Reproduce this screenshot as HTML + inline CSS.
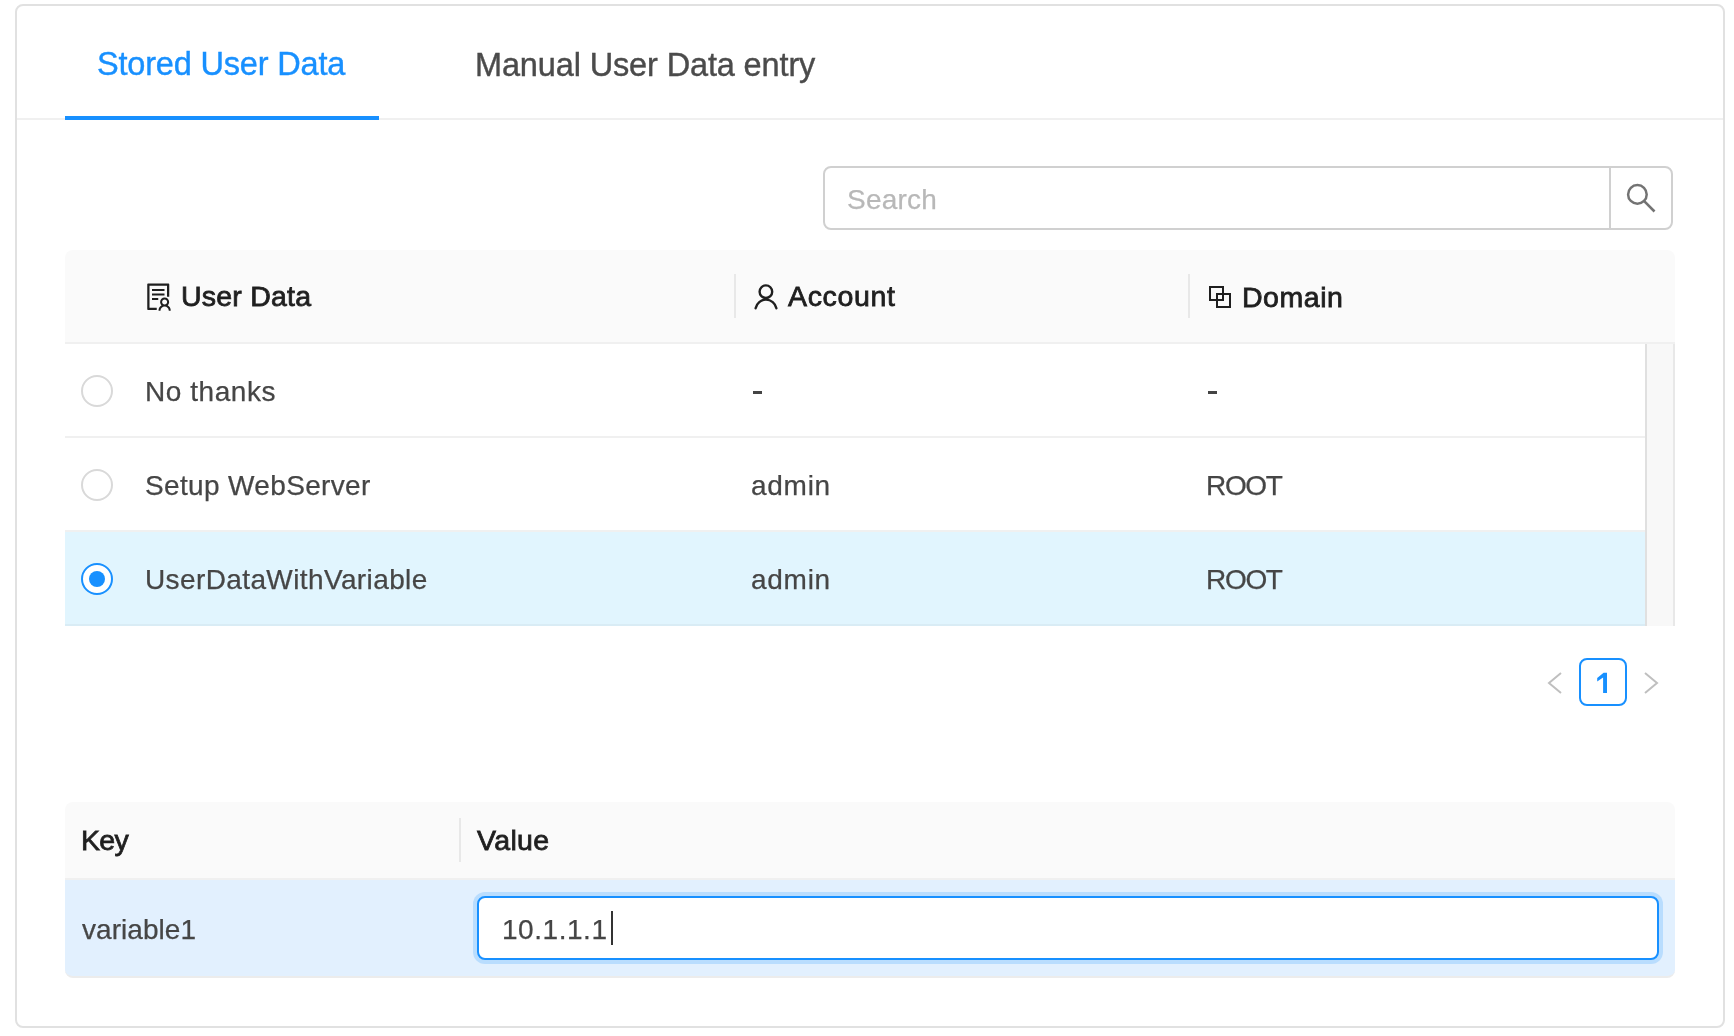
<!DOCTYPE html>
<html><head><meta charset="utf-8">
<style>
html,body{margin:0;padding:0;background:#fff;}
body{width:1734px;height:1036px;position:relative;overflow:hidden;font-family:"Liberation Sans",sans-serif;}
.a{position:absolute;box-sizing:border-box;}
.tx{position:absolute;white-space:nowrap;will-change:transform;}
.radio{position:absolute;width:32px;height:32px;border-radius:50%;border:2px solid #d9d9d9;background:#fff;box-sizing:border-box;left:81px;}
</style></head>
<body>
<!-- card -->
<div class="a" style="left:15px;top:4px;width:1710px;height:1024px;border:2px solid #e1e1e1;border-radius:8px;"></div>
<!-- tabs -->
<div class="a" style="left:17px;top:118px;width:1706px;height:2px;background:#f0f0f0;"></div>
<div class="a" style="left:65px;top:116px;width:314px;height:4px;background:#1890ff;"></div>

<!-- search -->
<div class="a" style="left:823px;top:166px;width:850px;height:64px;border:2px solid #d0d0d0;border-radius:8px;background:#fff;"></div>
<div class="a" style="left:1609px;top:166px;width:2px;height:64px;background:#d0d0d0;"></div>
<svg class="a" style="left:1620px;top:176px;" width="44" height="44" viewBox="1620 176 44 44">
  <circle cx="1637.4" cy="194.4" r="9.3" fill="none" stroke="#737373" stroke-width="2.5"/>
  <line x1="1644.2" y1="201.2" x2="1654.5" y2="211.5" stroke="#737373" stroke-width="2.6"/>
</svg>

<!-- table header -->
<div class="a" style="left:65px;top:250px;width:1610px;height:92px;background:#fafafa;border-radius:8px 8px 0 0;"></div>
<div class="a" style="left:65px;top:342px;width:1610px;height:2px;background:#f0f0f0;"></div>
<div class="a" style="left:734px;top:274px;width:2px;height:44px;background:#e8e8e8;"></div>
<div class="a" style="left:1188px;top:274px;width:2px;height:44px;background:#e8e8e8;"></div>


<svg class="a" style="left:144.75px;top:282.9px;" width="28" height="28" viewBox="64 64 896 896"><path fill="#1f1f1f" d="M688 264c0-4.4-3.6-8-8-8H296c-4.4 0-8 3.6-8 8v48c0 4.4 3.6 8 8 8h384c4.4 0 8-3.6 8-8v-48zm-8 136H296c-4.4 0-8 3.6-8 8v48c0 4.4 3.6 8 8 8h384c4.4 0 8-3.6 8-8v-48c0-4.4-3.6-8-8-8zM480 544H296c-4.4 0-8 3.6-8 8v48c0 4.4 3.6 8 8 8h184c4.4 0 8-3.6 8-8v-48c0-4.4-3.6-8-8-8zm-48 308H208V148h560v344c0 4.4 3.6 8 8 8h56c4.4 0 8-3.6 8-8V108c0-17.7-14.3-32-32-32H168c-17.7 0-32 14.3-32 32v784c0 17.7 14.3 32 32 32h264c4.4 0 8-3.6 8-8v-56c0-4.4-3.6-8-8-8zm356.8-74.4c29-26.3 47.2-64.3 47.2-106.6 0-79.5-64.5-144-144-144s-144 64.5-144 144c0 42.3 18.2 80.3 47.2 106.6-57 32.5-96.2 92.7-99.2 162.1-.2 4.5 3.5 8.3 8 8.3h48.1c4.2 0 7.7-3.3 8-7.6C564 871.2 621.7 816 692 816s128 55.2 131.9 124.4c.2 4.2 3.7 7.6 8 7.6H880c4.6 0 8.2-3.8 8-8.3-2.9-69.5-42.2-129.6-99.2-162.1zM692 591c44.2 0 80 35.8 80 80s-35.8 80-80 80-80-35.8-80-80 35.8-80 80-80z"/></svg>
<svg class="a" style="left:740px;top:270px;" width="50" height="50" viewBox="740 270 50 50">
  <circle cx="765.9" cy="291.7" r="6.3" fill="none" stroke="#1f1f1f" stroke-width="2.4"/>
  <path d="M755.6 308.2 A10.6 10.6 0 0 1 776.4 308.2" fill="none" stroke="#1f1f1f" stroke-width="2.4" stroke-linecap="round"/>
</svg>
<svg class="a" style="left:1200px;top:280px;" width="40" height="40" viewBox="1200 280 40 40">
  <rect x="1210" y="287" width="13" height="13" fill="none" stroke="#1f1f1f" stroke-width="2"/>
  <rect x="1217" y="294" width="13" height="13" fill="none" stroke="#1f1f1f" stroke-width="2"/>
</svg>

<!-- rows -->
<div class="a" style="left:65px;top:436px;width:1580px;height:2px;background:#f0f0f0;"></div>
<div class="a" style="left:65px;top:530px;width:1580px;height:2px;background:#f0f0f0;"></div>
<div class="a" style="left:65px;top:532px;width:1580px;height:92px;background:#e1f5fe;"></div>
<div class="a" style="left:65px;top:624px;width:1580px;height:2px;background:#d9ecf5;"></div>
<!-- scrollbar track -->
<div class="a" style="left:1645px;top:344px;width:30px;height:282px;background:#f8f8f8;border-left:2px solid #e0e0e0;border-right:2px solid #e8e8e8;"></div>

<div class="radio" style="top:375px;"></div>
<div class="radio" style="top:469px;"></div>
<div class="radio" style="top:563px;border-color:#1890ff;"><div class="a" style="left:6px;top:6px;width:16px;height:16px;border-radius:50%;background:#1890ff;"></div></div>

<div class="a" style="left:753px;top:391px;width:9px;height:3px;background:#444;"></div>
<div class="a" style="left:1208px;top:391px;width:9px;height:3px;background:#444;"></div>

<!-- pagination -->
<div class="a" style="left:1579px;top:658px;width:48px;height:48px;border:2px solid #1890ff;border-radius:8px;"></div>
<svg class="a" style="left:1590px;top:668px;" width="24" height="30" viewBox="1590 668 24 30"><path d="M1607 672.7 L1607 693 L1603.1 693 L1603.1 677.6 L1597.2 681.6 L1597.2 677.9 L1603.6 672.7 Z" fill="#1890ff"/></svg>
<svg class="a" style="left:1540px;top:665px;" width="130" height="36" viewBox="1540 665 130 36">
  <polyline points="1561,673 1549,683 1561,693" fill="none" stroke="#bfbfbf" stroke-width="2"/>
  <polyline points="1645,673 1657,683 1645,693" fill="none" stroke="#bfbfbf" stroke-width="2"/>
</svg>

<!-- KV table -->
<div class="a" style="left:65px;top:802px;width:1610px;height:76px;background:#fafafa;border-radius:8px 8px 0 0;"></div>
<div class="a" style="left:65px;top:878px;width:1610px;height:2px;background:#f0f0f0;"></div>
<div class="a" style="left:65px;top:880px;width:1610px;height:98px;background:#e2f0fe;border-bottom:2px solid #ececec;border-radius:0 0 8px 8px;"></div>
<div class="a" style="left:459px;top:818px;width:2px;height:44px;background:#e8e8e8;"></div>

<div class="a" style="left:477px;top:896px;width:1182px;height:64px;border:2px solid #1890ff;border-radius:8px;background:#fff;box-shadow:0 0 0 4px rgba(24,144,255,0.2);"></div>
<div class="a" style="left:611px;top:911px;width:2px;height:34px;background:#333;"></div>
<div class="tx" id="tab1" style="left:97.00px;top:48.00px;font-size:32.5px;line-height:32.5px;color:#1890ff;letter-spacing:-0.184px;-webkit-text-stroke:0.4px #1890ff;">Stored User Data</div>
<div class="tx" id="tab2" style="left:475.00px;top:49.00px;font-size:32.5px;line-height:32.5px;color:#4b4b4b;letter-spacing:-0.137px;-webkit-text-stroke:0.4px #4b4b4b;">Manual User Data entry</div>
<div class="tx" id="search" style="left:847.00px;top:186.00px;font-size:28px;line-height:28px;color:#b8b8b8;letter-spacing:0.234px;-webkit-text-stroke:0.25px #b8b8b8;">Search</div>
<div class="tx" id="hdr1" style="left:181.00px;top:282.00px;font-size:28.5px;line-height:28.5px;color:#1f1f1f;letter-spacing:0.221px;-webkit-text-stroke:0.8px #1f1f1f;">User Data</div>
<div class="tx" id="hdr2" style="left:788.00px;top:282.00px;font-size:28.5px;line-height:28.5px;color:#1f1f1f;letter-spacing:0.667px;-webkit-text-stroke:0.8px #1f1f1f;">Account</div>
<div class="tx" id="hdr3" style="left:1242.00px;top:283.00px;font-size:28.5px;line-height:28.5px;color:#1f1f1f;letter-spacing:0.534px;-webkit-text-stroke:0.8px #1f1f1f;">Domain</div>
<div class="tx" id="r1" style="left:145.00px;top:378.00px;font-size:28px;line-height:28px;color:#464646;letter-spacing:0.559px;-webkit-text-stroke:0.25px #464646;">No thanks</div>
<div class="tx" id="r2" style="left:145.00px;top:472.00px;font-size:28px;line-height:28px;color:#464646;letter-spacing:0.346px;-webkit-text-stroke:0.25px #464646;">Setup WebServer</div>
<div class="tx" id="r3" style="left:145.00px;top:566.00px;font-size:28px;line-height:28px;color:#464646;letter-spacing:0.387px;-webkit-text-stroke:0.25px #464646;">UserDataWithVariable</div>
<div class="tx" id="a2" style="left:751.00px;top:472.00px;font-size:28px;line-height:28px;color:#464646;letter-spacing:0.721px;-webkit-text-stroke:0.25px #464646;">admin</div>
<div class="tx" id="o2" style="left:1206.00px;top:472.00px;font-size:28px;line-height:28px;color:#464646;letter-spacing:-1.315px;-webkit-text-stroke:0.25px #464646;">ROOT</div>
<div class="tx" id="a3" style="left:751.00px;top:566.00px;font-size:28px;line-height:28px;color:#464646;letter-spacing:0.727px;-webkit-text-stroke:0.25px #464646;">admin</div>
<div class="tx" id="o3" style="left:1206.00px;top:566.00px;font-size:28px;line-height:28px;color:#464646;letter-spacing:-1.309px;-webkit-text-stroke:0.25px #464646;">ROOT</div>
<div class="tx" id="key" style="left:81.00px;top:826.00px;font-size:28.5px;line-height:28.5px;color:#1f1f1f;letter-spacing:-0.643px;-webkit-text-stroke:0.8px #1f1f1f;">Key</div>
<div class="tx" id="val" style="left:477.00px;top:826.00px;font-size:28.5px;line-height:28.5px;color:#1f1f1f;letter-spacing:0.316px;-webkit-text-stroke:0.8px #1f1f1f;">Value</div>
<div class="tx" id="var" style="left:82.00px;top:916.00px;font-size:28px;line-height:28px;color:#464646;letter-spacing:0.043px;-webkit-text-stroke:0.25px #464646;">variable1</div>
<div class="tx" id="ip" style="left:502.00px;top:916.00px;font-size:28px;line-height:28px;color:#454545;letter-spacing:0.544px;-webkit-text-stroke:0.25px #454545;">10.1.1.1</div>
</body></html>
